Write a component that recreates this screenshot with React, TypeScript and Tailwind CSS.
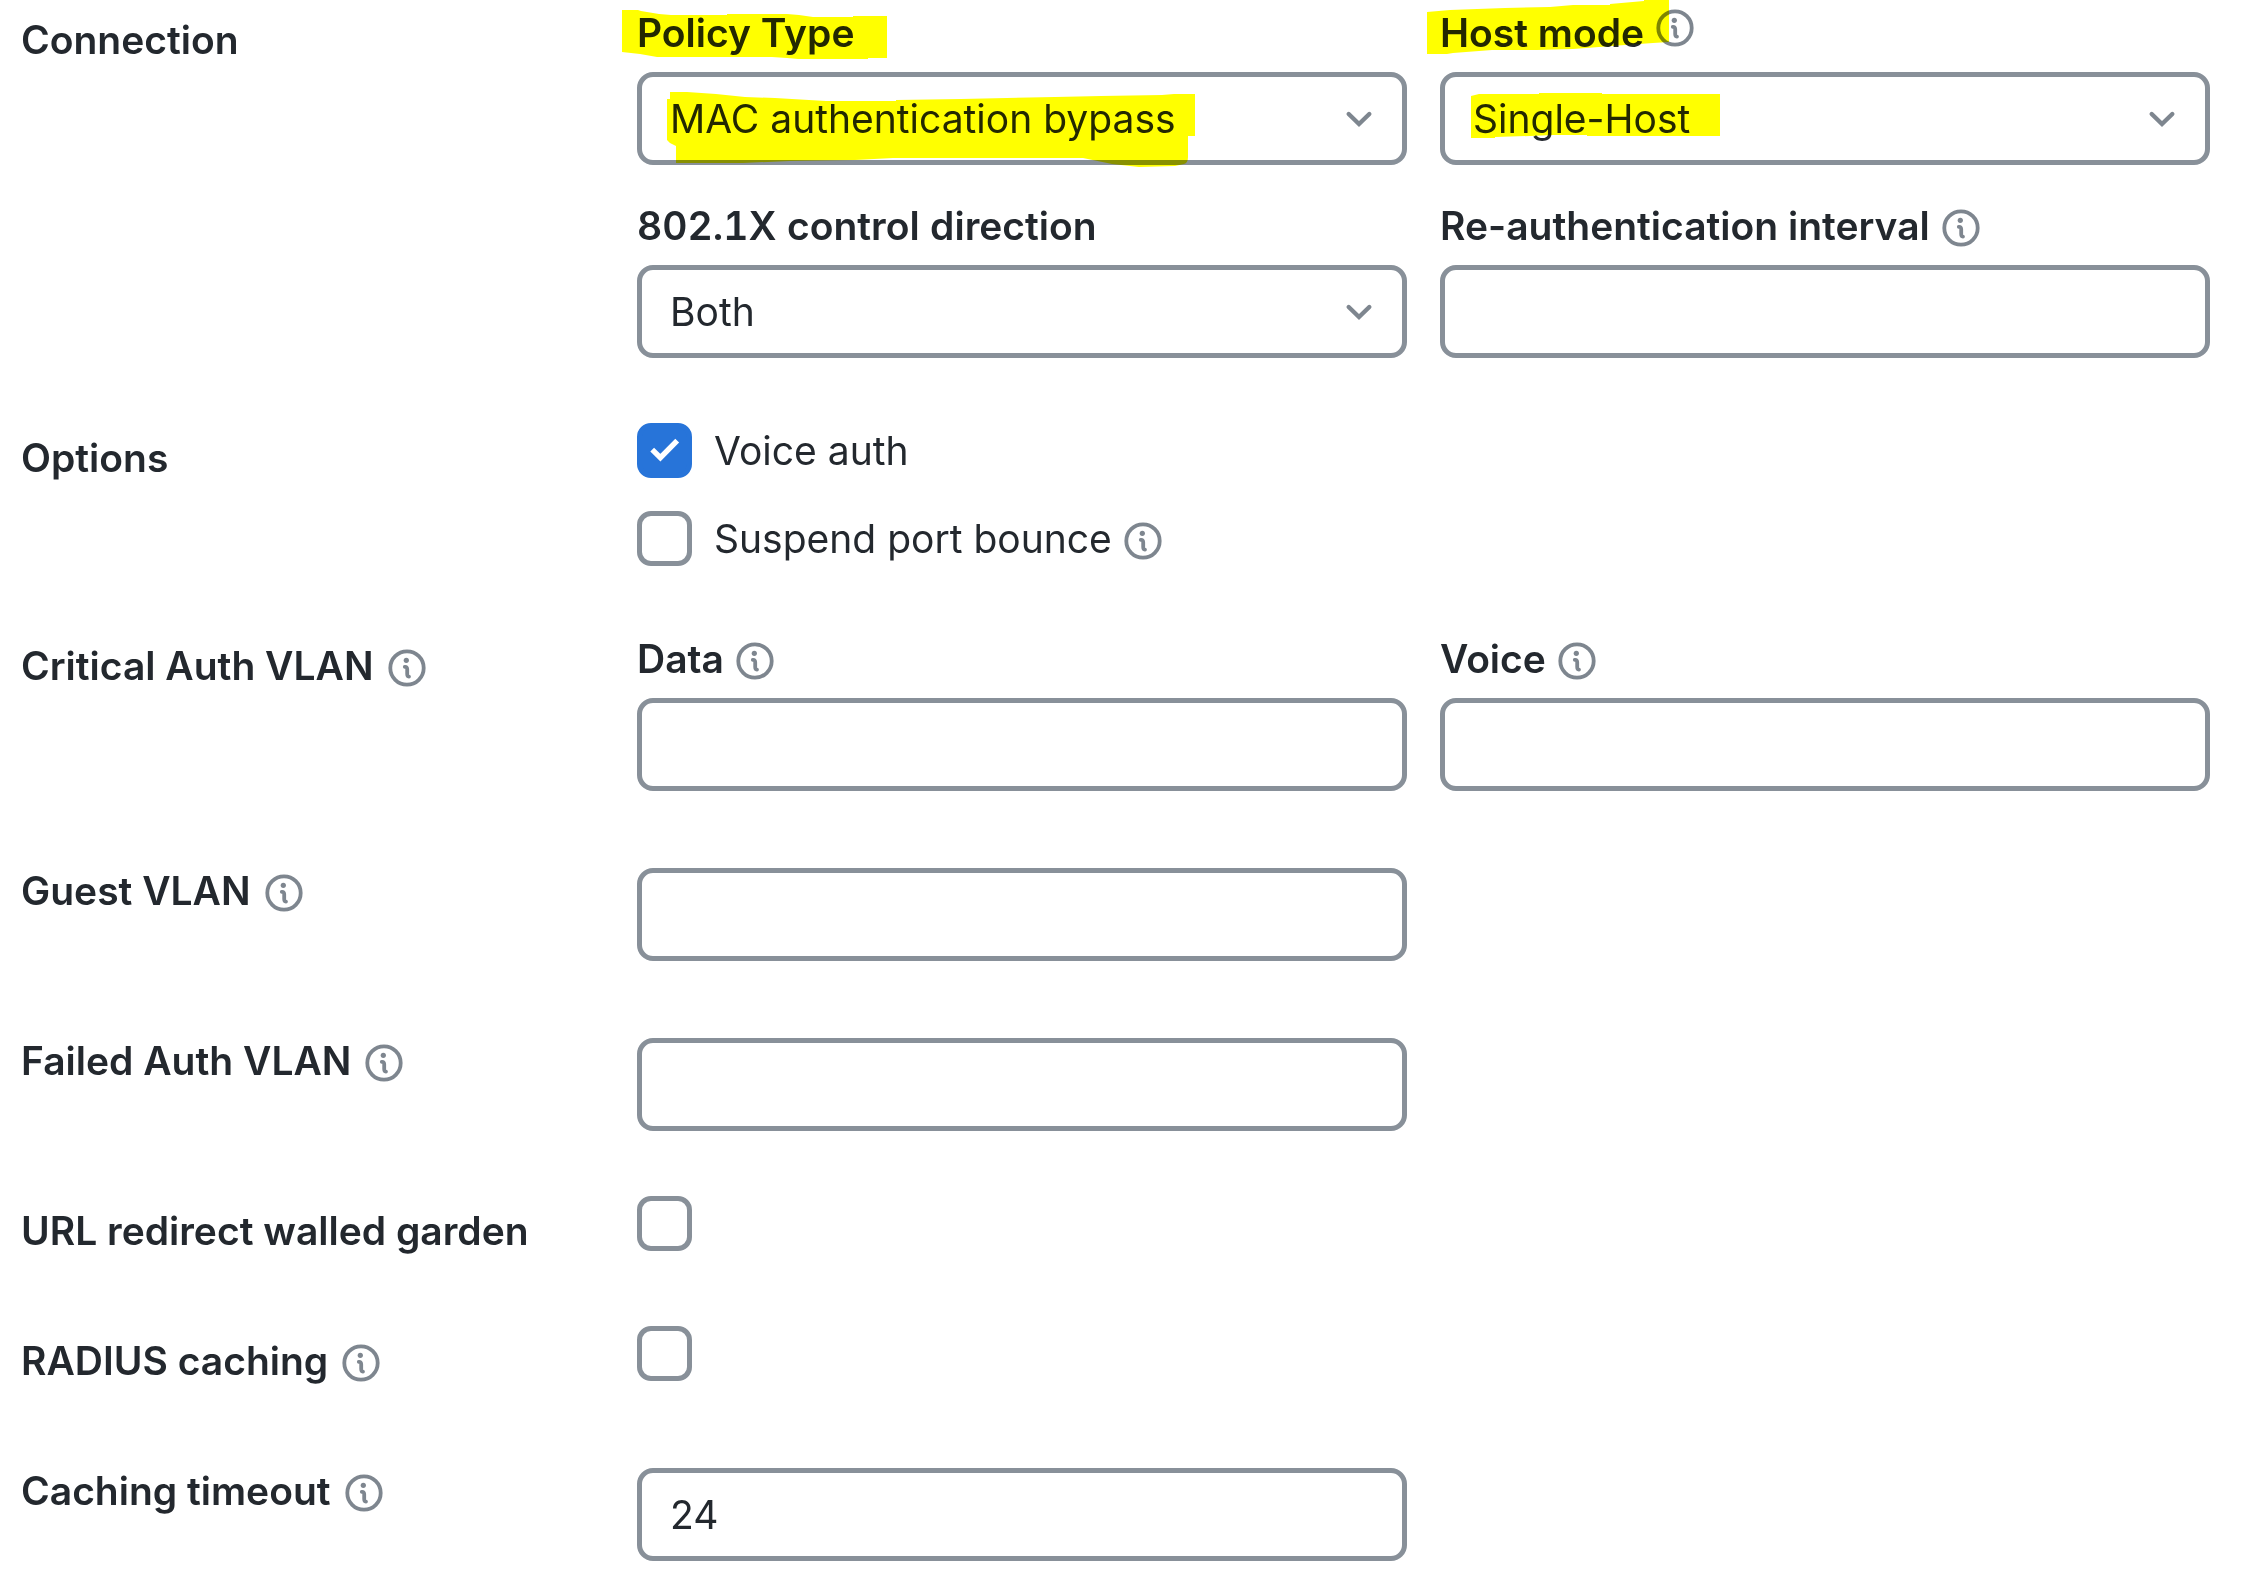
import { useId, useState } from "react";
import type { ReactNode } from "react";
import { cx } from "class-variance-authority";

const controlClass =
  "block h-[93px] w-full rounded-[16px] border-5 border-[#889099] bg-white px-7 text-[39px] text-[#23282e] outline-none focus:border-[#2774d9]";

const InfoButton = ({ about, top = false }: { about: string; top?: boolean }) => (
  <button type="button" aria-label={`About ${about}`} className={cx("mt-1 shrink-0 text-[#7e868f]", top && "self-start")}>
    <svg viewBox="-19 -19 38 38" className="block size-[38px]" fill="none" stroke="currentColor" aria-hidden="true">
      <circle r="16.7" strokeWidth="3.8" />
      <circle cx="-0.7" cy="-7.7" r="2.6" fill="currentColor" stroke="none" />
      <path d="M-2.2 -1.2 Q0.2 -1.4 0.2 1.2 V6 Q0.2 8.4 2 8.6" strokeWidth="3.8" strokeLinecap="round" />
    </svg>
  </button>
);

// highlighter strokes drawn over a field, in the field's own coordinates
const Marker = ({ paths }: { paths: string[] }) => (
  <svg className="pointer-events-none absolute left-0 top-0 size-px overflow-visible mix-blend-multiply" fill="#ffff00" aria-hidden="true">
    {paths.map((d) => (
      <path key={d} d={d} />
    ))}
  </svg>
);

const policyMarks = [
  "M-15 5H1L4 6L22 9L34 10H90V9H150L162 10L176 12H216V11H250V53H231V54H161L150 53L135 52H105V52H20L3 49L-15 47Z",
  "M33 87H50L79 89L108 92L138 93L189 96H259V95L324 94L418 92L464 91L525 90L537 89H558V131H551V152Q551 158 547 159L538 161L502 162L475 159L446 153H403L291 153L256 153L218 155L153 156L106 158H39V141L33 138L30 135V94H33Z",
];

const hostMarks = [
  "M-13 7L10 5L37 4L65 3L110 2L133 0H170V-1L204 -4V-5H229V37L213 38L185 40L133 44L97 45H52L13 48L7 49H-13Z",
  "M31 91L39 89H99V88H162V89H280V131H147V130H113L90 131L55 132V133H31Z",
];

interface FieldProps {
  label: string;
  info?: boolean;
  infoTop?: boolean;
  tabular?: boolean;
  marks?: string[];
  children: (id: string) => ReactNode;
}

const Field = ({ label, info, infoTop, tabular, marks, children }: FieldProps) => {
  const id = useId();
  return (
    <div className="relative flex min-w-0 flex-col gap-3">
      <div className="flex h-[55px] items-center gap-3">
        <label htmlFor={id} className={cx("font-semibold", tabular && "tabular-nums")}>{label}</label>
        {info && <InfoButton about={label} top={infoTop} />}
      </div>
      {children(id)}
      {marks && <Marker paths={marks} />}
    </div>
  );
};

const Select = ({ id, options }: { id: string; options: string[] }) => (
  <div className="relative">
    <select id={id} className={cx(controlClass, "appearance-none")}>
      {options.map((option) => (
        <option key={option}>{option}</option>
      ))}
    </select>
    <svg viewBox="0 0 44 44" className="pointer-events-none absolute right-[26px] top-[25px] size-11 text-[#7e868f]" fill="none" stroke="currentColor" strokeWidth="4.4" strokeLinecap="round" aria-hidden="true">
      <path d="M11.7 17L22 27L32.3 17" />
    </svg>
  </div>
);

const TextInput = ({ id, value }: { id: string; value?: string }) => (
  <input id={id} type="text" defaultValue={value} className={controlClass} />
);

const Checkbox = ({ id, checked = false }: { id: string; checked?: boolean }) => {
  const [on, setOn] = useState(checked);
  return (
    <span className="relative block size-[55px] shrink-0">
      <input
        id={id}
        type="checkbox"
        checked={on}
        onChange={(e) => setOn(e.target.checked)}
        className="block size-full appearance-none rounded-[14px] border-5 border-[#889099] bg-white checked:border-[#2774d9] checked:bg-[#2774d9]"
      />
      {on && (
        <svg viewBox="0 0 55 55" className="pointer-events-none absolute inset-0" fill="none" stroke="#fff" strokeWidth="5.4" aria-hidden="true">
          <path d="M15.2 26.6L23.4 34.6L40.2 17.6" />
        </svg>
      )}
    </span>
  );
};

const Option = ({ label, checked, info }: { label: string; checked?: boolean; info?: boolean }) => {
  const id = useId();
  return (
    <div className="flex h-[55px] items-center">
      <Checkbox id={id} checked={checked} />
      <label htmlFor={id} className="pl-[22px] pr-3">{label}</label>
      {info && <InfoButton about={label} />}
    </div>
  );
};

interface RowProps {
  title: string;
  info?: boolean;
  htmlFor?: string;
  children: ReactNode;
}

const Row = ({ title, info, htmlFor, children }: RowProps) => (
  <div className="grid min-h-[65px] grid-cols-[583px_minmax(0,1fr)_minmax(0,1fr)] items-start gap-x-[33px]">
    <div className="mt-[7px] flex h-[55px] items-center gap-[14px]">
      {htmlFor ? (
        <label htmlFor={htmlFor} className="font-semibold">{title}</label>
      ) : (
        <h2 className="font-semibold">{title}</h2>
      )}
      {info && <InfoButton about={title} />}
    </div>
    {children}
  </div>
);

export default function App() {
  return (
    <form className="flex flex-col gap-[65px] bg-white pb-3 pl-[21px] pr-[31px] pt-[5px] font-['Inter',sans-serif] text-[39px] leading-[55px] text-[#23282e]">
      <Row title="Connection">
        <div className="col-span-2 grid grid-cols-2 items-start gap-[33px]">
          <Field label="Policy Type" marks={policyMarks}>
            {(id) => <Select id={id} options={["MAC authentication bypass", "802.1X", "Hybrid authentication"]} />}
          </Field>
          <Field label="Host mode" info infoTop marks={hostMarks}>
            {(id) => <Select id={id} options={["Single-Host", "Multi-Domain", "Multi-Auth", "Multi-Host"]} />}
          </Field>
          <Field label="802.1X control direction" tabular>
            {(id) => <Select id={id} options={["Both", "In"]} />}
          </Field>
          <Field label="Re-authentication interval" info>
            {(id) => <TextInput id={id} />}
          </Field>
        </div>
      </Row>

      <Row title="Options">
        <div className="col-span-2 flex flex-col gap-[33px]">
          <Option label="Voice auth" checked />
          <Option label="Suspend port bounce" info />
        </div>
      </Row>

      <Row title="Critical Auth VLAN" info>
        <Field label="Data" info>{(id) => <TextInput id={id} />}</Field>
        <Field label="Voice" info>{(id) => <TextInput id={id} />}</Field>
      </Row>

      <Row title="Guest VLAN" info htmlFor="guest-vlan">
        <div className="pt-3">
          <TextInput id="guest-vlan" />
        </div>
      </Row>

      <Row title="Failed Auth VLAN" info htmlFor="failed-vlan">
        <div className="pt-3">
          <TextInput id="failed-vlan" />
        </div>
      </Row>

      <Row title="URL redirect walled garden" htmlFor="walled-garden">
        <Checkbox id="walled-garden" />
      </Row>

      <Row title="RADIUS caching" info htmlFor="radius-caching">
        <Checkbox id="radius-caching" />
      </Row>

      <Row title="Caching timeout" info htmlFor="caching-timeout">
        <div className="pt-3">
          <TextInput id="caching-timeout" value="24" />
        </div>
      </Row>
    </form>
  );
}
